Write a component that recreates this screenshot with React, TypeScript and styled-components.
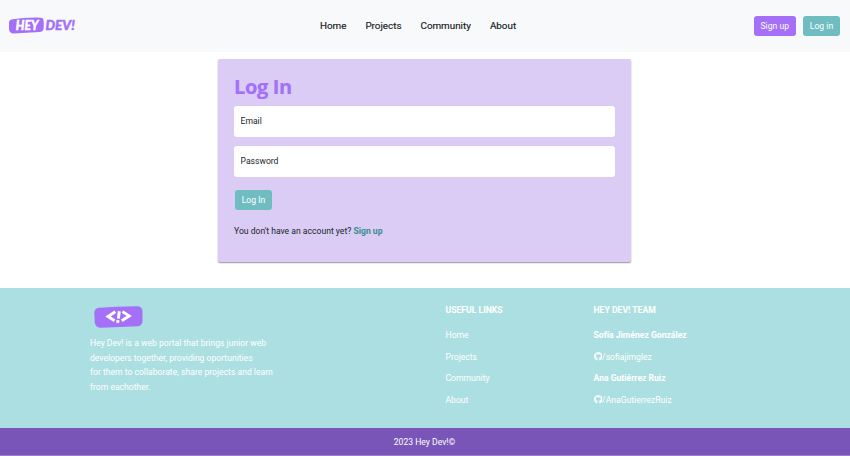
import React from "react";
import styled, { createGlobalStyle } from "styled-components";
import { FaGithub } from "react-icons/fa";

const GlobalStyle = createGlobalStyle`
  *, *::before, *::after { box-sizing: border-box; }
  body {
    margin: 0;
    background: #fff;
    color: #212529;
    font: 400 8.61px/14.5px Roboto, sans-serif;
  }
  a { color: inherit; text-decoration: none; }
`;

const Page = styled.div`
  display: flex;
  flex-direction: column;
  height: 456px;
  overflow: hidden;
`;

const Header = styled.header`
  display: grid;
  grid-template-columns: 1fr auto 1fr;
  align-items: center;
  flex: none;
  height: 52px;
  padding: 0 10px 0 8px;
  background: #f8f9fb;
`;

const Brand = styled.a`
  display: flex;
`;

const Nav = styled.nav`
  display: flex;
  gap: 19px;
  padding-right: 12px;
`;

const NavLink = styled.a`
  color: #17191b;
  font-size: 9.85px;
  font-weight: 400;
  line-height: 14px;
  -webkit-text-stroke: 0.15px #17191b;
`;

const Actions = styled.div`
  display: flex;
  justify-content: flex-end;
  gap: 7px;
`;

const Button = styled.button<{ $tone: "violet" | "teal"; $width: number }>`
  width: ${(p) => p.$width}px;
  height: 20px;
  padding: 0;
  border: 0;
  border-radius: 3px;
  background: ${(p) => (p.$tone === "violet" ? "#a370f7" : "#70bdc1")};
  color: #fff;
  font: 400 8.61px/20px Roboto, sans-serif;
  text-align: center;
  white-space: nowrap;
`;

const Main = styled.main`
  flex: none;
  height: 236px;
  padding-top: 7px;
`;

const Card = styled.form`
  display: flex;
  flex-direction: column;
  align-items: flex-start;
  width: 413.5px;
  height: 203px;
  margin-left: 217.5px;
  padding: 16px 16.5px;
  border-radius: 2px;
  background: #daccf5;
  box-shadow: 0 1px 1.5px rgba(0, 0, 0, 0.42);
`;

const Title = styled.h1`
  margin: 0 0 6.5px;
  color: #a370f7;
  font: 700 20px/24px "Open Sans", sans-serif;
  letter-spacing: -0.35px;
  -webkit-text-stroke: 0.2px #a370f7;
`;

const Field = styled.input`
  width: 381px;
  height: 31px;
  margin-bottom: 9px;
  padding: 0 6.5px 1px;
  border: 0;
  border-radius: 3px;
  background: #fff;
  font: 400 8.61px/14px Roboto, sans-serif;
  &::placeholder { color: #212529; opacity: 1; }
`;

const Submit = styled(Button)`
  margin: 4.5px 0 0 1px;
  line-height: 19px;
`;

const Prompt = styled.p`
  margin: 13.5px 0 0;
  line-height: 15px;
  a { color: #398b8c; font-weight: 700; }
`;

const Footer = styled.footer`
  display: grid;
  grid-template-columns: 355.5px 148px 1fr;
  flex: none;
  height: 140px;
  padding: 17px 0 0 90px;
  background: #acdfe1;
  color: #fff;
`;

const About = styled.p`
  margin: 6px 0 0;
  line-height: 14.6px;
`;

const Column = styled.section`
  display: flex;
  flex-direction: column;
  align-items: flex-start;
`;

const ColumnTitle = styled.h2`
  margin: -2px 0 10.5px;
  font: 700 8.63px/14.5px Roboto, sans-serif;
`;

const FooterLink = styled.a`
  display: flex;
  align-items: center;
  height: 14.5px;
  margin-bottom: 7px;
`;

const Member = styled(FooterLink)`
  font-weight: 700;
`;

const GithubIcon = styled(FaGithub)`
  flex: none;
  width: 8.6px;
  height: 8.6px;
  stroke: #fff;
  stroke-width: 14;
`;

const Copyright = styled.div`
  flex: none;
  height: 28px;
  padding-right: 1px;
  border-bottom: 1px solid #9b80cb;
  background: #7855b7;
  color: #fff;
  line-height: 29px;
  text-align: center;
`;

const Logo = () => (
  <svg width="70" height="20" viewBox="0 0 70 20" role="img" aria-label="Hey Dev!">
    <path d="M4.5 3.2Q18 1.2 33 1.7Q35.5 2 35.7 5V12Q35.6 15.5 32 16Q18 16.6 5 17.4Q1.6 17.2 1 13.6V6.5Q1.2 3.8 4.5 3.2Z" fill="#a370f7" />
    <g fontFamily="Lato, sans-serif" fontWeight="900" fontStyle="italic" fontSize="12.2" strokeWidth="0.4">
      <text x="7.8" y="13.9" fill="#fff" stroke="#fff" textLength="22.6" lengthAdjust="spacingAndGlyphs">HEY</text>
      <text x="37.4" y="13.5" fill="#a370f7" stroke="#a370f7" textLength="29.4" lengthAdjust="spacingAndGlyphs">DEV!</text>
    </g>
  </svg>
);

const CodeMark = styled.svg`
  display: block;
  margin-left: 4px;
`;

const links = ["Home", "Projects", "Community", "About"];
const team = [
  { name: "Sofía Jiménez González", handle: "sofiajimglez" },
  { name: "Ana Gutiérrez Ruiz", handle: "AnaGutierrezRuiz" },
];

export default function App() {
  return (
    <Page>
      <GlobalStyle />
      <Header>
        <Brand href="#"><Logo /></Brand>
        <Nav>
          {links.map((label) => <NavLink href="#" key={label}>{label}</NavLink>)}
        </Nav>
        <Actions>
          <Button type="button" $tone="violet" $width={42.5}>Sign up</Button>
          <Button type="button" $tone="teal" $width={37}>Log in</Button>
        </Actions>
      </Header>
      <Main>
        <Card>
          <Title>Log In</Title>
          <Field type="email" placeholder="Email" />
          <Field type="password" placeholder="Password" />
          <Submit type="button" $tone="teal" $width={37}>Log In</Submit>
          <Prompt>You don't have an account yet? <a href="#">Sign up</a></Prompt>
        </Card>
      </Main>
      <Footer>
        <Column>
          <CodeMark width="50" height="25" viewBox="0 0 50 25" aria-label="Code">
            <path d="M5 2.8Q24 1.2 44 1.3Q48 1.7 48.5 6V16Q48.2 20.6 44 21.2L7 22.8Q2 23 .8 18L.3 7.5Q.5 3.5 5 2.8Z" fill="#a370f7" />
            <g fill="none" stroke="#fff" strokeWidth="2.9">
              <path d="M21.3 6.8L14 11.5L20.6 15.8M28.5 6.6L35.2 10.9L27.7 15.8" />
              <path d="M25.3 6.2L24.4 13.6M24 15.2L23.7 17.8" />
            </g>
          </CodeMark>
          <About>
            Hey Dev! is a web portal that brings junior web<br />
            developers together, providing oportunities<br />
            for them to collaborate, share projects and learn<br />
            from eachother.
          </About>
        </Column>
        <Column>
          <ColumnTitle>USEFUL LINKS</ColumnTitle>
          {links.map((label) => <FooterLink href="#" key={label}>{label}</FooterLink>)}
        </Column>
        <Column>
          <ColumnTitle>HEY DEV! TEAM</ColumnTitle>
          {team.map(({ name, handle }) => (
            <React.Fragment key={handle}>
              <Member as="span">{name}</Member>
              <FooterLink href="#"><GithubIcon />/{handle}</FooterLink>
            </React.Fragment>
          ))}
        </Column>
      </Footer>
      <Copyright>2023 Hey Dev!©</Copyright>
    </Page>
  );
}
